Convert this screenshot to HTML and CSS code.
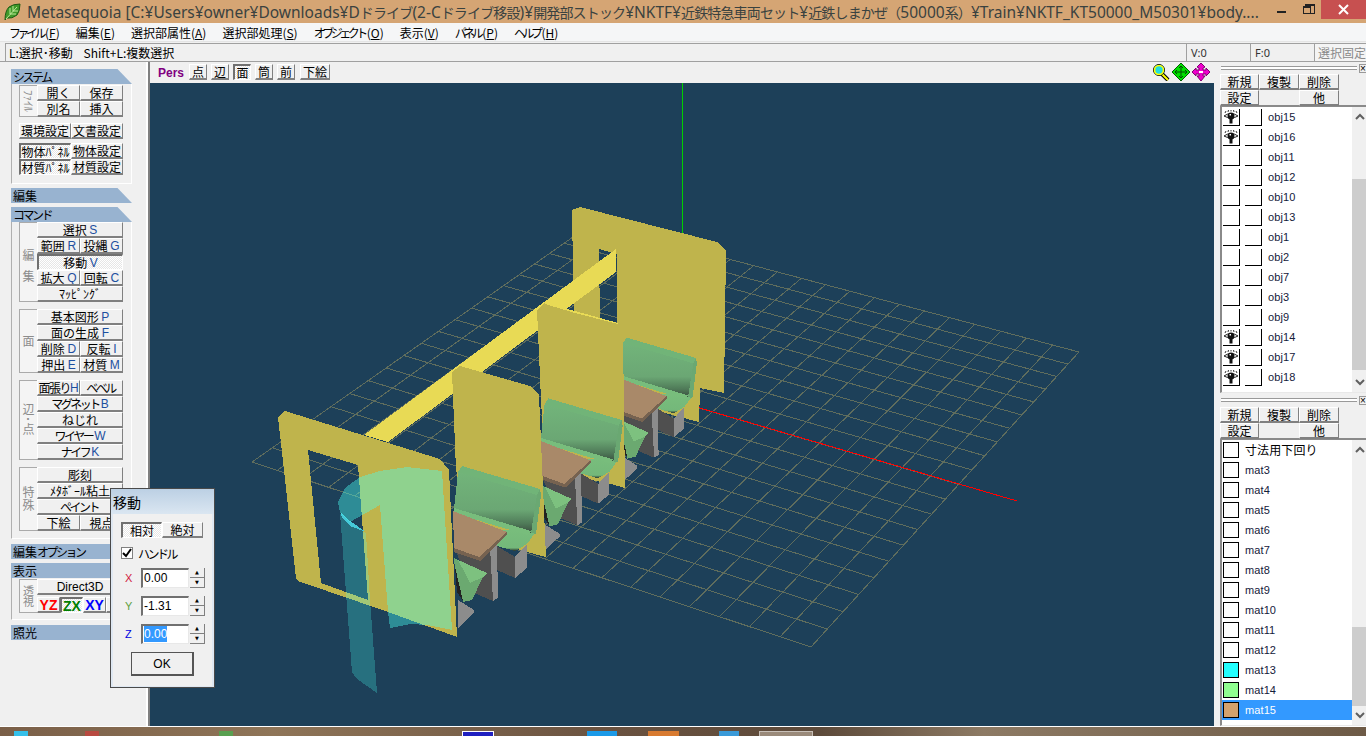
FILE: index.html
```html
<!DOCTYPE html>
<html lang="ja">
<head>
<meta charset="UTF-8" />
<title>Metasequoia</title>
<link rel="stylesheet" href="styles.css">
<script src="grid.js"></script>
</head>
<body>
<svg class="defs" width="0" height="0">
	<symbol id="eye" viewBox="0 0 16 14">
		<path d="M2 3 L3 1 M5 2 L5.5 0 M8 1.500 L8 0 M11 2 L10.500 0 M14 3 L13 1" fill="none" stroke="#333" stroke-width="1"/>
		<path d="M1 6 Q8 1 15 6 Q8 10 1 6Z" fill="#fff" stroke="#222"/>
		<circle cx="8" cy="6" r="3.500" fill="#111"/>
		<rect x="6.500" y="8" width="3" height="5.500" fill="#111"/>
		<rect x="6.500" y="4" width="1.500" height="1.500" fill="#fff"/>
	</symbol>
	<symbol id="up" viewBox="0 0 10 7"><path d="M1 6 L5 2 L9 6" fill="none" stroke="#606060" stroke-width="2"/></symbol>
	<symbol id="down" viewBox="0 0 10 7"><path d="M1 1 L5 5 L9 1" fill="none" stroke="#606060" stroke-width="2"/></symbol>
</svg>

<div class="app">
	<div class="titlebar">
		<svg class="leaf" width="17" height="18" viewBox="0 0 17 18">
			<path d="M1 17 Q1 8 5 4 Q9 1 16 1 Q16 8 13 12 Q8 16 3 15Z" fill="#3f9a2a" stroke="#1c5a14"/>
			<path d="M2 16 L13 4 M6 11 L6 5 M6 11 L12 11 M9 8 L9 3 M9 8 L14 8" stroke="#bfe89a" fill="none"/>
		</svg>
		<span class="title-text">Metasequoia [C:¥Users¥owner¥Downloads¥D<span class="cjk">ドライブ</span>(2-C<span class="cjk">ドライブ移設</span>)¥<span class="cjk">開発部ストック</span>¥NKTF¥<span class="cjk">近鉄特急車両セット</span>¥<span class="cjk">近鉄しまかぜ（</span>50000<span class="cjk">系）</span>¥Train¥NKTF_KT50000_M50301¥body....</span>
		<div class="winbtns">
			<span class="win-min"></span>
			<span class="win-max"><i></i></span>
			<span class="win-close">
				<svg width="11" height="11" viewBox="0 0 11 11"><path d="M1 1 L10 10 M10 1 L1 10" stroke="#fff" stroke-width="2"/></svg>
			</span>
		</div>
	</div>

	<div class="menubar">
		<span><span class="kana">ファイル</span>(<u>F</u>)</span>
		<span>編集(<u>E</u>)</span>
		<span>選択部属性(<u>A</u>)</span>
		<span>選択部処理(<u>S</u>)</span>
		<span><span class="kana">オブジェクト</span>(<u>O</u>)</span>
		<span>表示(<u>V</u>)</span>
		<span><span class="kana">パネル</span>(<u>P</u>)</span>
		<span><span class="kana">ヘルプ</span>(<u>H</u>)</span>
	</div>

	<div class="hintbar">
		<div class="hint">L:選択･移動&nbsp;&nbsp;&nbsp; Shift+L:複数選択</div>
		<div class="count">V:0</div>
		<div class="count">F:0</div>
		<div class="lock">選択固定</div>
	</div>

	<div class="main">
		<div class="left">
			<div class="sec-head"><span class="kana">システム</span></div>
			<div class="sec-body">
				<div class="group">
					<div class="glabel small">ﾌｧｲﾙ</div>
					<div class="btns">
						<div class="btn">開く</div><div class="btn">保存</div>
						<div class="btn">別名</div><div class="btn">挿入</div>
					</div>
				</div>
				<div class="btns-wide gap-6">
					<div class="btn">環境設定</div><div class="btn">文書設定</div>
				</div>
				<div class="btns-wide gap-4">
					<div class="btn on">物体ﾊﾟﾈﾙ</div><div class="btn">物体設定</div>
					<div class="btn on">材質ﾊﾟﾈﾙ</div><div class="btn">材質設定</div>
				</div>
			</div>

			<div class="sec-head mt-4">編集</div>
			<div class="sec-head mt-4"><span class="kana">コマンド</span></div>
			<div class="sec-body body-cmd">
				<div class="group">
					<div class="glabel spaced">編集</div>
					<div class="btns">
						<div class="btn wide">選択 <span class="key">S</span></div>
						<div class="btn">範囲 <span class="key">R</span></div><div class="btn">投縄 <span class="key">G</span></div>
						<div class="btn wide on">移動 <span class="key">V</span></div>
						<div class="btn">拡大 <span class="key">Q</span></div><div class="btn">回転 <span class="key">C</span></div>
						<div class="btn wide">ﾏｯﾋﾟﾝｸﾞ</div>
					</div>
				</div>
				<div class="group gap-7">
					<div class="glabel">面</div>
					<div class="btns">
						<div class="btn wide">基本図形 <span class="key">P</span></div>
						<div class="btn wide">面の生成 <span class="key">F</span></div>
						<div class="btn">削除 <span class="key">D</span></div><div class="btn">反転 <span class="key">I</span></div>
						<div class="btn">押出 <span class="key">E</span></div><div class="btn">材質 <span class="key">M</span></div>
					</div>
				</div>
				<div class="group gap-7">
					<div class="glabel tight">辺･点</div>
					<div class="btns">
						<div class="btn"><span class="squeeze">面張り</span><span class="key">H</span></div><div class="btn"><span class="kana">ベベル</span></div>
						<div class="btn wide"><span class="kana">マグネット</span> <span class="key">B</span></div>
						<div class="btn wide">ねじれ</div>
						<div class="btn wide"><span class="kana">ワイヤー</span> <span class="key">W</span></div>
						<div class="btn wide"><span class="kana">ナイフ</span> <span class="key">K</span></div>
					</div>
				</div>
				<div class="group gap-7">
					<div class="glabel tight">特殊</div>
					<div class="btns">
						<div class="btn wide">彫刻</div>
						<div class="btn wide">ﾒﾀﾎﾞｰﾙ粘土</div>
						<div class="btn wide"><span class="kana">ペイント</span></div>
						<div class="btn">下絵</div><div class="btn">視点</div>
					</div>
				</div>
			</div>

			<div class="sec-head plain mt-5">編集<span class="kana">オプション</span></div>
			<div class="sec-head plain mt-4">表示</div>
			<div class="sec-body body-view">
				<div class="group">
					<div class="glabel small">透視</div>
					<div class="view-btns">
						<div class="btn wide latin">Direct3D</div>
						<div class="axis-row">
							<div class="btn axis yz">YZ</div>
							<div class="btn axis zx on">ZX</div>
							<div class="btn axis xy">XY</div>
							<div class="btn axis">&nbsp;</div>
						</div>
					</div>
				</div>
			</div>
			<div class="sec-head plain mt-5">照光</div>
		</div>

		<div class="center">
			<div class="toolbar">
				<span class="pers">Pers</span>
				<div class="btn tool">点</div>
				<div class="btn tool">辺</div>
				<div class="btn tool on">面</div>
				<div class="btn tool">筒</div>
				<div class="btn tool">前</div>
				<div class="btn tool tool-wide">下絵</div>
				<div class="view-tools">
					<svg width="18" height="18" viewBox="0 0 18 18">
						<path d="M10 11 L16 17" stroke="#000" stroke-width="4"/>
						<path d="M10 11 L16 17" stroke="#ffff00" stroke-width="2"/>
						<circle cx="7" cy="7" r="5.500" fill="#22dddd" stroke="#000" stroke-width="1"/>
						<circle cx="7" cy="7" r="4.500" fill="none" stroke="#ffff00" stroke-width="1.600"/>
					</svg>
					<svg width="18" height="18" viewBox="0 0 18 18">
						<path d="M9 0 L18 9 L9 18 L0 9Z" fill="#00e000" stroke="#006000"/>
						<path d="M9 3 V15 M3 9 H15 M7 5 L9 3 L11 5 M7 13 L9 15 L11 13 M5 7 L3 9 L5 11 M13 7 L15 9 L13 11" fill="none" stroke="#005000"/>
					</svg>
					<svg width="18" height="18" viewBox="0 0 18 18">
						<path d="M9 0 L13 4 L11 5 L11 7 L14 7 L14 5 L18 9 L14 13 L14 11 L11 11 L11 13 L13 13 L9 18 L5 13 L7 13 L7 11 L4 11 L4 13 L0 9 L4 5 L4 7 L7 7 L7 5 L5 4Z" fill="#ee00cc" stroke="#800070"/>
						<path d="M7 9 H11" stroke="#fff" stroke-width="2"/>
					</svg>
				</div>
			</div>
			<div class="viewport">
				<svg class="scene" viewBox="150 83 1064 643" shape-rendering="crispEdges">
					<defs>
						<linearGradient id="backface" x1="0" y1="0" x2="0" y2="1">
							<stop offset="0" stop-color="#72b47a"/>
							<stop offset="0.62" stop-color="#6ba774"/>
							<stop offset="0.85" stop-color="#4f7a58"/>
							<stop offset="1" stop-color="#3a4f40"/>
						</linearGradient>
						<linearGradient id="cushion" x1="0" y1="0" x2="0" y2="1">
							<stop offset="0" stop-color="#78bd7c"/>
							<stop offset="0.85" stop-color="#74b87a"/>
							<stop offset="1" stop-color="#26302a"/>
						</linearGradient>
						<g id="seat">
							<polygon points="458,600 474,610 474,613 458,628" fill="#8c8c8c"/>
							<polygon points="454,548 478,560 490,547 493,601 474,593 463,567" fill="#4f4f4f"/>
							<polygon points="490,547 497,544 498,598 493,601" fill="#8c8c8c"/>
							<polygon points="454,558 487,573 483,577 472,600 463,602 455,570" fill="#6ba970"/>
							<polygon points="458,560 487,573 483,577 470,583 465,573" fill="#7dc17f"/>
							<polygon points="455,567 463,601 457,592" fill="#222"/>
							<polygon points="497,546 515,557 515,578 497,570" fill="#4f4f4f"/>
							<polygon points="515,557 527,544 527,568 515,578" fill="#8c8c8c"/>
							<polygon points="497,530 528,530 535,533 527,544 515,551 497,546" fill="url(#cushion)"/>
							<polygon points="462,466 540,489 537,495 458,472" fill="#71b478"/>
							<polygon points="458,472 537,495 531,533 454,509" fill="url(#backface)"/>
							<polygon points="540,489 541,495 536,534 531,533 537,495" fill="#6aa872"/>
							<polygon points="454,508 531,531 528,535 500,527 454,513" fill="#78bd7c"/>
							<polygon points="453,511 507,532 479,557 454,548" fill="#a98969"/>
							<polygon points="454,548 479,557 507,532 507,535 480,561 454,552" fill="#766250"/>
						</g>
					</defs>

					<g id="grid"></g>
					<line x1="682" y1="83" x2="682" y2="404" stroke="#00d000"/>
					<line x1="686" y1="404" x2="1017" y2="501" stroke="#ff0000"/>

					<polygon fill-rule="evenodd" fill="#bfb44c" points="572,210 580,207 717,242 726,250 724,393 700,388 699,422 680,417 617,400 575,390 572,210 599,249 617,254 617,330 600,325 599,249"/>
					<polygon fill="#e8da55" points="616,249 616,272 388,442 364,435"/>
					<use href="#seat" transform="translate(696 358) scale(.89) translate(-540 -489)"/>

					<polygon fill="#bfb44c" points="537,310 545,303 618,323 623,335 625,488 611,484 545,470 541,400"/>
					<polygon fill="#e8da55" points="545,303 560,307 575,311 618,323 618,324 575,313 545,304"/>
					<use href="#seat" transform="translate(621.7 420) scale(.94) translate(-540 -489)"/>

					<polygon fill="#bfb44c" points="452,372 460,366 530,386 539,395 546,557 527,552 470,535 456,470"/>
					<use href="#seat"/>

					<polygon fill-rule="evenodd" fill="#bfb44c" points="278,417 285,411 440,459 449,470 457,637 388,612 298,581 296,578 278,417 308,450 358,465 368,600 321,583 308,450"/>

					<polygon fill="#49fff3" fill-opacity=".25" points="340,513 350,524 366,533 370,600 377,693 357,679 352,672 346,593"/>
					<polygon fill="#45c8d8" points="341,513 350,521 366,532 350,526 342,518"/>
					<polygon fill="#49fff3" fill-opacity=".4" points="338,502 345,488 360,477 380,471 407,467 442,471 452,630 427,625 410,624 390,628 388,612 380,505 350,522 340,513"/>
				</svg>
			</div>
		</div>

		<div class="right">
			<div class="grip grip-obj"><span class="grip-line"></span><span class="grip-x">×</span></div>
			<div class="list-tools">
				<div class="btn">新規</div><div class="btn">複製</div><div class="btn">削除</div>
				<div class="btn">設定</div><div></div><div class="btn">他</div>
			</div>
			<div class="list list-obj">
				<div class="rows">
					<div class="row"><span class="cell"><svg width="16" height="14"><use href="#eye"/></svg></span><span class="cell"></span><span class="name">obj15</span></div>
					<div class="row"><span class="cell"><svg width="16" height="14"><use href="#eye"/></svg></span><span class="cell"></span><span class="name">obj16</span></div>
					<div class="row"><span class="cell"></span><span class="cell"></span><span class="name">obj11</span></div>
					<div class="row"><span class="cell"></span><span class="cell"></span><span class="name">obj12</span></div>
					<div class="row"><span class="cell"></span><span class="cell"></span><span class="name">obj10</span></div>
					<div class="row"><span class="cell"></span><span class="cell"></span><span class="name">obj13</span></div>
					<div class="row"><span class="cell"></span><span class="cell"></span><span class="name">obj1</span></div>
					<div class="row"><span class="cell"></span><span class="cell"></span><span class="name">obj2</span></div>
					<div class="row"><span class="cell"></span><span class="cell"></span><span class="name">obj7</span></div>
					<div class="row"><span class="cell"></span><span class="cell"></span><span class="name">obj3</span></div>
					<div class="row"><span class="cell"></span><span class="cell"></span><span class="name">obj9</span></div>
					<div class="row"><span class="cell"><svg width="16" height="14"><use href="#eye"/></svg></span><span class="cell"></span><span class="name">obj14</span></div>
					<div class="row"><span class="cell"><svg width="16" height="14"><use href="#eye"/></svg></span><span class="cell"></span><span class="name">obj17</span></div>
					<div class="row"><span class="cell"><svg width="16" height="14"><use href="#eye"/></svg></span><span class="cell"></span><span class="name">obj18</span></div>
				</div>
				<div class="sb">
					<svg class="sb-arrow" width="10" height="7"><use href="#up"/></svg>
					<div class="sb-gap-obj"></div>
					<div class="sb-thumb thumb-obj"></div>
					<svg class="sb-arrow" width="10" height="7"><use href="#down"/></svg>
				</div>
			</div>

			<div class="grip grip-mat"><span class="grip-line"></span><span class="grip-x">×</span></div>
			<div class="list-tools">
				<div class="btn">新規</div><div class="btn">複製</div><div class="btn">削除</div>
				<div class="btn">設定</div><div></div><div class="btn">他</div>
			</div>
			<div class="list list-mat">
				<div class="rows">
					<div class="row"><span class="swatch"></span><span class="name jp">寸法用下回り</span></div>
					<div class="row"><span class="swatch"></span><span class="name">mat3</span></div>
					<div class="row"><span class="swatch"></span><span class="name">mat4</span></div>
					<div class="row"><span class="swatch"></span><span class="name">mat5</span></div>
					<div class="row"><span class="swatch"></span><span class="name">mat6</span></div>
					<div class="row"><span class="swatch"></span><span class="name">mat7</span></div>
					<div class="row"><span class="swatch"></span><span class="name">mat8</span></div>
					<div class="row"><span class="swatch"></span><span class="name">mat9</span></div>
					<div class="row"><span class="swatch"></span><span class="name">mat10</span></div>
					<div class="row"><span class="swatch"></span><span class="name">mat11</span></div>
					<div class="row"><span class="swatch"></span><span class="name">mat12</span></div>
					<div class="row"><span class="swatch" style="background-color:#22ffff"></span><span class="name">mat13</span></div>
					<div class="row"><span class="swatch" style="background-color:#90ff90"></span><span class="name">mat14</span></div>
					<div class="row selected"><span class="swatch" style="background-color:#d4a26c"></span><span class="name">mat15</span></div>
				</div>
				<div class="sb">
					<svg class="sb-arrow" width="10" height="7"><use href="#up"/></svg>
					<div class="sb-gap-mat"></div>
					<div class="sb-thumb thumb-mat"></div>
					<svg class="sb-arrow" width="10" height="7"><use href="#down"/></svg>
				</div>
			</div>
		</div>
	</div>

	<div class="taskbar">
		<span class="chip c-cyan"></span>
		<span class="chip c-red"></span>
		<span class="chip c-green"></span>
		<span class="chip c-flag"></span>
		<span class="chip c-blue"></span>
		<span class="chip c-orange"></span>
		<span class="chip c-ball"></span>
		<span class="chip c-tile"></span>
	</div>

	<div class="dlg">
		<div class="dlg-title">移動</div>
		<div class="dlg-body">
			<div class="dlg-tabs">
				<div class="btn on">相対</div><div class="btn">絶対</div>
			</div>
			<div class="dlg-check">
				<span class="checkbox">
					<svg width="10" height="10" viewBox="0 0 10 10"><path d="M1 5 L4 8 L9 1" fill="none" stroke="#000" stroke-width="2"/></svg>
				</span>
				<span class="kana">ハンドル</span>
			</div>
			<div class="dlg-row"><span class="axis-name ax-x">X</span><span class="field">0.00</span><span class="spin"><i>▲</i><i>▼</i></span></div>
			<div class="dlg-row"><span class="axis-name ax-y">Y</span><span class="field">-1.31</span><span class="spin"><i>▲</i><i>▼</i></span></div>
			<div class="dlg-row"><span class="axis-name ax-z">Z</span><span class="field"><span class="sel">0.00</span></span><span class="spin"><i>▲</i><i>▼</i></span></div>
			<div class="btn dlg-ok">OK</div>
		</div>
	</div>
</div>
</body>
</html>
```

FILE: styles.css
```css
* {
	box-sizing: border-box;
}
html, body {
	margin: 0;
	padding: 0;
	overflow: hidden;
}
body {
	font: 12px "Noto Sans CJK JP", "Noto Sans", sans-serif;
	color: #000;
	background-color: #f0f0f0;
}
.defs {
	position: absolute;
}
.app {
	position: relative;
	display: flex;
	flex-direction: column;
	width: 1366px;
	height: 736px;
	overflow: hidden;
}
.kana {
	letter-spacing: -2.5px;
	margin-right: 2px;
}
.squeeze {
	letter-spacing: -1.5px;
}

/* title */
.titlebar {
	display: flex;
	align-items: center;
	flex: 0 0 23px;
	padding-left: 4px;
	background-color: #d5a574;
}
.leaf {
	flex: none;
	margin-right: 6px;
}
.title-text {
	flex: 1;
	white-space: nowrap;
	overflow: hidden;
	font: 15.5px "Noto Sans", "Noto Sans CJK JP", sans-serif;
	color: #3a4240;
}
.cjk {
	font-size: 14px;
	font-family: "Noto Sans CJK JP", sans-serif;
	letter-spacing: -.85px;
}
.winbtns {
	display: flex;
	align-self: flex-start;
	flex: none;
}
.win-min, .win-max {
	position: relative;
	display: block;
	width: 26px;
	height: 20px;
}
.win-min::after {
	content: "";
	position: absolute;
	left: 8px;
	top: 11px;
	width: 9px;
	height: 2px;
	background-color: #222;
}
.win-max i {
	position: absolute;
	left: 8px;
	top: 6px;
	width: 8px;
	height: 8px;
	border: 1px solid #222;
	border-top-width: 2px;
	background-color: #d5a574;
}
.win-max::before {
	content: "";
	position: absolute;
	left: 10px;
	top: 4px;
	width: 8px;
	height: 7px;
	border: 1px solid #222;
	border-top-width: 2px;
}
.win-close {
	display: flex;
	align-items: center;
	justify-content: center;
	width: 45px;
	height: 19px;
	background-color: #c75050;
}

/* menu */
.menubar {
	display: flex;
	flex: 0 0 19px;
	gap: 16px;
	align-items: center;
	padding-left: 9px;
	background-color: #f5f6f7;
	border-bottom: 1px solid #e4e4e4;
	white-space: nowrap;
}
.menubar .kana {
	letter-spacing: -3.5px;
}
.hintbar {
	display: flex;
	flex: 0 0 20px;
	padding: 1px 0 0 5px;
	background-color: #f0f0f0;
	border-bottom: 1px solid #a0a0a0;
}
.hint, .count, .lock {
	display: flex;
	align-items: center;
	height: 18px;
	border-top: 1px solid #a0a0a0;
	border-left: 1px solid #a0a0a0;
	white-space: nowrap;
}
.hint {
	flex: 1;
	padding-left: 3px;
}
.count {
	flex: 0 0 64px;
	padding-left: 4px;
	font-family: "Noto Sans", sans-serif;
	font-size: 11px;
	color: #333;
}
.lock {
	flex: 0 0 52px;
	padding-left: 3px;
	color: #8a8a8a;
	background-color: #f4f4f4;
	overflow: hidden;
}

.main {
	display: flex;
	flex: 1;
	min-height: 0;
}

/* left panel */
.left {
	flex: 0 0 150px;
	padding: 7px 0 0 11px;
	background-color: #f0f0f0;
	border-right: 2px solid #808080;
	box-shadow: inset -12px 0 0 -10px #fff, inset -3px 0 0 #f0f0f0;
}
.sec-head {
	width: 121px;
	height: 15px;
	padding-left: 2px;
	line-height: 15px;
	background-color: #98b3d0;
	clip-path: polygon(0 0, 88% 0, 100% 100%, 0 100%);
	white-space: nowrap;
}
.sec-head.plain {
	clip-path: none;
}
.mt-4 {
	margin-top: 4px;
}
.mt-5 {
	margin-top: 5px;
}
.sec-body {
	width: 121px;
	height: 100px;
	padding: 1px 0 0 7px;
	border-left: 1px solid #b0b0b0;
	border-right: 1px solid #fff;
	border-bottom: 1px solid #fff;
}
.body-cmd {
	height: 317px;
	padding-top: 0;
}
.body-view {
	height: 42px;
}
.group {
	display: flex;
}
.gap-6 {
	margin-top: 6px;
}
.gap-4 {
	margin-top: 4px;
}
.gap-7 {
	margin-top: 7px;
}
.glabel {
	display: flex;
	align-items: center;
	justify-content: center;
	flex: 0 0 18px;
	writing-mode: vertical-rl;
	border: 1px solid #aaa;
	border-right: 0;
	color: #8c8c8c;
	background-color: #f4f4f4;
}
.glabel.small {
	font-size: 11px;
}
.glabel.spaced {
	padding-top: 16px;
	letter-spacing: 9px;
}
.glabel.tight {
	letter-spacing: 1px;
}
.btns {
	display: grid;
	grid-template-columns: 43px 43px;
	grid-auto-rows: 16px;
}
.btns-wide {
	display: grid;
	grid-template-columns: 52px 52px;
	grid-auto-rows: 16px;
}
.btn {
	display: flex;
	align-items: center;
	justify-content: center;
	overflow: hidden;
	white-space: pre;
	line-height: 1;
	background-color: #f0f0f0;
	border-top: 1px solid #fff;
	border-left: 1px solid #fff;
	border-right: 1px solid #808080;
	border-bottom: 2px solid #808080;
}
.btn.on {
	border-top: 2px solid #707070;
	border-left: 2px solid #707070;
	border-right: 1px solid #fff;
	border-bottom: 1px solid #fff;
	background: repeating-conic-gradient(#fff 0 25%, #e6e6e6 0 50%) 0 0 / 2px 2px;
}
.wide {
	grid-column: span 2;
}
.key {
	font-family: "Liberation Sans", sans-serif;
	color: #1d4f9f;
}
.latin {
	font-family: "Liberation Sans", sans-serif;
}
.view-btns {
	display: flex;
	flex-direction: column;
	width: 86px;
	height: 34px;
	justify-content: space-between;
}
.view-btns .wide {
	height: 16px;
}
.axis-row {
	display: flex;
	width: 92px;
	height: 16px;
	overflow: visible;
}
.axis {
	flex: 0 0 23px;
	font: bold 14px "Liberation Sans", sans-serif;
}
.yz {
	color: #ff0000;
}
.zx {
	color: #008000;
}
.xy {
	color: #0000ff;
}

/* centre */
.center {
	display: flex;
	flex-direction: column;
	flex: 0 0 1064px;
}
.toolbar {
	display: flex;
	align-items: flex-start;
	flex: 0 0 21px;
	gap: 4px;
	padding: 2px 4px 0 8px;
}
.pers {
	width: 27px;
	margin-top: 2px;
	font: bold 12px "Liberation Sans", sans-serif;
	color: #800080;
}
.tool {
	width: 18px;
	height: 16px;
}
.tool-wide {
	width: 30px;
	margin-left: 1px;
}
.view-tools {
	display: flex;
	gap: 2px;
	margin: -1px 0 0 auto;
}
.viewport {
	flex: 1;
	min-height: 0;
	background-color: #1d4059;
}
.scene {
	display: block;
	width: 100%;
	height: 100%;
}

/* right panel */
.right {
	flex: 0 0 152px;
	background-color: #f0f0f0;
	padding-left: 4px;
}
.grip {
	display: flex;
	align-items: center;
	height: 12px;
	padding-left: 3px;
}
.grip-mat {
	height: 14px;
}
.grip-line {
	width: 136px;
	height: 4px;
	border-top: 1px solid #999;
	border-bottom: 1px solid #999;
	background-color: #fff;
}
.grip-x {
	width: 8px;
	height: 9px;
	margin-left: 2px;
	font: 10px/8px "Liberation Sans", sans-serif;
	text-align: center;
	border: 1px solid #999;
	overflow: hidden;
}
.list-tools {
	display: grid;
	grid-template-columns: 39px 40px 40px;
	grid-auto-rows: 16px;
	padding-left: 2px;
}
.list {
	display: flex;
	margin: -1px 0 0 2px;
	border-top: 2px solid #8a8a8a;
	border-left: 2px solid #8a8a8a;
	border-bottom: 1px solid #e8e8e8;
}
.list-obj, .list-mat {
	height: 288px;
}
.rows {
	flex: 1;
	background-color: #fff;
	overflow: hidden;
}
.row {
	display: flex;
	align-items: center;
	gap: 5px;
	height: 20px;
	padding-left: 1px;
}
.cell {
	display: flex;
	align-items: center;
	justify-content: center;
	width: 17px;
	height: 17px;
	border-right: 1px solid #000;
	border-bottom: 1px solid #000;
	background-color: #fff;
}
.swatch {
	flex: none;
	width: 16px;
	height: 16px;
	border: 1px solid #000;
	background-color: #fff;
}
.name {
	margin-left: 1px;
	padding-bottom: 1px;
	font: 11px "Liberation Sans", sans-serif;
	letter-spacing: .1px;
	color: #14203a;
	white-space: nowrap;
}
.name.jp {
	font: 12px "Noto Sans CJK JP", sans-serif;
	color: #000;
}
.selected {
	background-color: #3399ff;
}
.selected .name {
	color: #fff;
}
.sb {
	display: flex;
	flex-direction: column;
	align-items: center;
	flex: 0 0 15px;
	background-color: #f0f0f0;
}
.sb-arrow {
	flex: none;
	margin: 6px 0;
}
.sb-thumb {
	width: 15px;
	background-color: #cdcdcd;
}
.sb-gap-obj {
	height: 54px;
}
.thumb-obj {
	height: 195px;
	margin-bottom: 3px;
}
.sb-gap-mat {
	height: 169px;
}
.thumb-mat {
	height: 80px;
}

/* bottom strip */
.taskbar {
	display: flex;
	flex: 0 0 10px;
	border-top: 1px solid #fff;
	background: linear-gradient(90deg, #7a5f48 0, #8f7558 20%, #6a5240 45%, #5d4a3a 60%, #8d7a64 72%, #6d5a46 100%);
	overflow: hidden;
}
.chip {
	display: block;
	height: 9px;
	margin-top: 4px;
}
.c-cyan {
	width: 14px;
	margin-left: 14px;
	background-color: #35c0ea;
}
.c-red {
	width: 14px;
	margin-left: 57px;
	background-color: #b84a40;
}
.c-green {
	width: 14px;
	margin-left: 120px;
	background-color: #59a050;
}
.c-flag {
	width: 32px;
	margin-left: 229px;
	background-color: #2020c0;
	border: 1px solid #fff;
}
.c-blue {
	width: 30px;
	margin-left: 93px;
	background-color: #1b9ae8;
}
.c-orange {
	width: 31px;
	margin-left: 31px;
	background-color: #d87a30;
}
.c-ball {
	width: 20px;
	margin-left: 40px;
	background-color: #3a9ad8;
}
.c-tile {
	width: 54px;
	margin-left: 20px;
	background-color: #9a8a7a;
	border: 1px solid #c8c0b8;
}

/* floating dialog */
.dlg {
	position: absolute;
	left: 110px;
	top: 488px;
	width: 105px;
	height: 200px;
	border: 1px solid #4a4a4a;
	background-color: #dfe8f2;
}
.dlg-title {
	height: 25px;
	padding: 3px 0 0 2px;
	font-size: 14px;
	line-height: 20px;
	background: linear-gradient(#bcd0e4, #dae6f1);
}
.dlg-body {
	height: 172px;
	margin: 0 2px;
	padding: 8px 0 0 8px;
	background-color: #f0f0f0;
}
.dlg-tabs {
	display: grid;
	grid-template-columns: 41px 41px;
	grid-auto-rows: 16px;
}
.dlg-check {
	display: flex;
	align-items: center;
	gap: 5px;
	height: 12px;
	margin: 9px 0;
}
.checkbox {
	display: flex;
	align-items: center;
	justify-content: center;
	width: 12px;
	height: 12px;
	background-color: #fff;
	border: 1px solid #808080;
}
.dlg-row {
	display: flex;
	align-items: center;
	height: 20px;
	margin-bottom: 8px;
}
.axis-name {
	flex: 0 0 20px;
	padding-left: 4px;
	font: 11px "Liberation Sans", sans-serif;
}
.ax-x {
	color: #d02040;
}
.ax-y {
	color: #60a040;
}
.ax-z {
	color: #0000e0;
}
.field {
	flex: 0 0 48px;
	height: 20px;
	padding-left: 1px;
	font: 12px/16px "Liberation Sans", sans-serif;
	background-color: #fff;
	border-top: 2px solid #707070;
	border-left: 2px solid #707070;
	border-right: 1px solid #e8e8e8;
	border-bottom: 1px solid #e8e8e8;
}
.sel {
	display: inline-block;
	color: #fff;
	background-color: #3399ff;
}
.spin {
	display: flex;
	flex-direction: column;
	flex: 0 0 15px;
	height: 20px;
	margin-left: 1px;
}
.spin i {
	flex: 1;
	font: normal 5px/8px "DejaVu Sans", sans-serif;
	text-align: center;
	background-color: #f0f0f0;
	border-right: 1px solid #808080;
	border-bottom: 1px solid #808080;
}
.dlg-ok {
	width: 63px;
	height: 24px;
	margin: 8px 0 0 10px;
	font: 12px "Liberation Sans", sans-serif;
	border: 1px solid #555;
	border-bottom-width: 2px;
	border-right-width: 2px;
}
```

FILE: grid.js
```js
// floor grid of the 3D view, 20 x 20 cells in perspective
window.onload = function() {
	var far = [593, 223],
		right = [1079, 352],
		near = [811, 647],
		left = [252, 462],
		group = document.getElementById("grid"),
		ns = "http://www.w3.org/2000/svg",
		n = 20;

	var dx1 = right[0] - near[0],
		dx2 = left[0] - near[0],
		dx3 = far[0] - right[0] + near[0] - left[0],
		dy1 = right[1] - near[1],
		dy2 = left[1] - near[1],
		dy3 = far[1] - right[1] + near[1] - left[1],
		den = dx1 * dy2 - dx2 * dy1,
		g = (dx3 * dy2 - dx2 * dy3) / den,
		h = (dx1 * dy3 - dx3 * dy1) / den,
		a = right[0] - far[0] + g * right[0],
		b = left[0] - far[0] + h * left[0],
		d = right[1] - far[1] + g * right[1],
		e = left[1] - far[1] + h * left[1];

	function point(u, v) {
		var w = g * u + h * v + 1;
		return [(a * u + b * v + far[0]) / w, (d * u + e * v + far[1]) / w];
	}
	function line(p, q) {
		var l = document.createElementNS(ns, "line");
		l.setAttribute("x1", p[0]);
		l.setAttribute("y1", p[1]);
		l.setAttribute("x2", q[0]);
		l.setAttribute("y2", q[1]);
		l.setAttribute("stroke", "#5f6d5d");
		group.appendChild(l);
	}
	for (var i = 0; i <= n; i++) {
		line(point(i / n, 0), point(i / n, 1));
		line(point(0, i / n), point(1, i / n));
	}
};
```
